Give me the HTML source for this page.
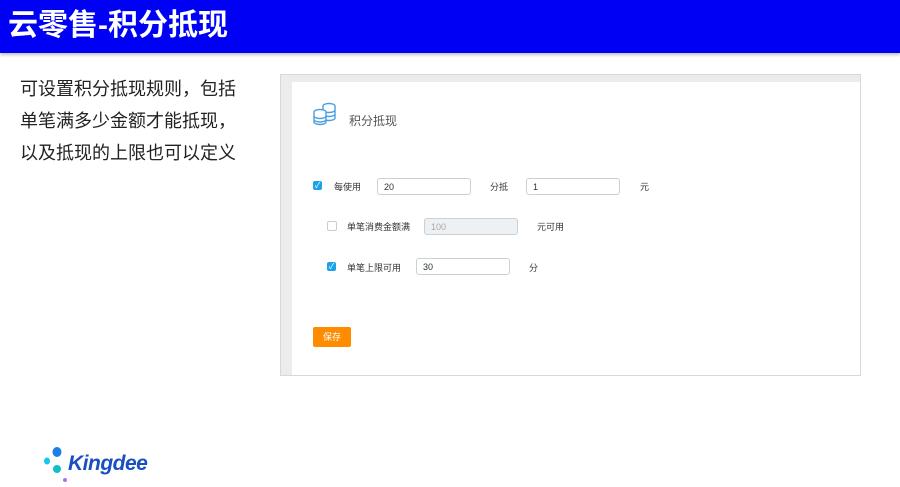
<!DOCTYPE html>
<html><head><meta charset="utf-8"><style>
body{margin:0;width:900px;height:487px;background:#fff;position:relative;overflow:hidden;font-family:"Liberation Sans","Noto Sans CJK SC",sans-serif}
.hdr{position:absolute;left:0;top:0;width:900px;height:53px;background:#0000f5;box-shadow:0 2px 3px rgba(0,0,0,.25)}
.hdr span{position:absolute;left:8px;top:6px;color:#fff;font-size:30px;font-weight:bold;line-height:40px}
.txt{position:absolute;left:20px;top:73px;font-size:18px;line-height:32px;color:#222}
.panel{position:absolute;left:280px;top:74px;width:579px;height:300px;background:#ececec;border:1px solid #d8d8d8}
.inner{position:absolute;left:11px;top:7px;right:0;bottom:0;background:#fff}
.a{position:absolute;font-size:9px;color:#333;white-space:nowrap}
.in{position:absolute;height:17px;border:1px solid #c8d0d8;border-radius:3px;background:#fff;font-size:9px;line-height:17px;padding-left:6px;box-sizing:border-box;color:#333}
.cb{position:absolute;width:9px;height:9px;border-radius:2px;background:#1aa3e8;color:#fff;font-size:8px;line-height:9px;text-align:center}
.cbe{position:absolute;width:8px;height:8px;border:1px solid #ccc;border-radius:2px}
</style></head><body>
<div class="hdr"><span>云零售-积分抵现</span></div>
<div class="txt">可设置积分抵现规则，包括<br>单笔满多少金额才能抵现，<br>以及抵现的上限也可以定义</div>
<div class="panel"><div class="inner"></div>
<svg style="position:absolute;left:31px;top:27px" width="26" height="24" viewBox="0 0 26 24" fill="#fff" stroke="#4a9ee0" stroke-width="1.4"><ellipse cx="17" cy="4" rx="6" ry="2.5"/><path d="M11 4v12c0 1.4 2.7 2.5 6 2.5s6-1.1 6-2.5V4M11 8c0 1.4 2.7 2.5 6 2.5s6-1.1 6-2.5M11 12c0 1.4 2.7 2.5 6 2.5s6-1.1 6-2.5"/><ellipse cx="8" cy="10" rx="6" ry="2.5"/><path d="M2 10v10c0 1.4 2.7 2.5 6 2.5s6-1.1 6-2.5V10M2 14c0 1.4 2.7 2.5 6 2.5s6-1.1 6-2.5M2 17.5c0 1.4 2.7 2.5 6 2.5s6-1.1 6-2.5"/></svg>
<div class="a" style="left:68px;top:37px;font-size:12px;color:#555">积分抵现</div>
<div class="cb" style="left:32px;top:106px">✓</div>
<div class="a" style="left:53px;top:105px">每使用</div>
<div class="in" style="left:96px;top:103px;width:94px">20</div>
<div class="a" style="left:209px;top:105px">分抵</div>
<div class="in" style="left:245px;top:103px;width:94px">1</div>
<div class="a" style="left:359px;top:105px">元</div>
<div class="cbe" style="left:46px;top:146px"></div>
<div class="a" style="left:66px;top:145px">单笔消费金额满</div>
<div class="in" style="left:143px;top:143px;width:94px;background:#eef1f4;color:#aaa">100</div>
<div class="a" style="left:256px;top:145px">元可用</div>
<div class="cb" style="left:46px;top:187px">✓</div>
<div class="a" style="left:66px;top:186px">单笔上限可用</div>
<div class="in" style="left:135px;top:183px;width:94px">30</div>
<div class="a" style="left:248px;top:186px">分</div>
<div style="position:absolute;left:32px;top:252px;width:38px;height:20px;background:#ff8c00;border-radius:2px;color:#fff;font-size:9px;line-height:20px;text-align:center">保存</div>
</div>
<svg style="position:absolute;left:40px;top:444px" width="30" height="40"><ellipse cx="17" cy="8" rx="4.5" ry="5" fill="#1a7fe8"/><ellipse cx="7" cy="17" rx="3" ry="3.5" fill="#14c8f0"/><ellipse cx="17" cy="25" rx="4" ry="4" fill="#10c0c8"/><circle cx="25" cy="36" r="2" fill="#b070f0"/></svg>
<div style="position:absolute;left:68px;top:452px;font-size:21px;font-weight:bold;font-style:italic;color:#1a4fc0;letter-spacing:-0.5px">Kingdee</div>
</body></html>
